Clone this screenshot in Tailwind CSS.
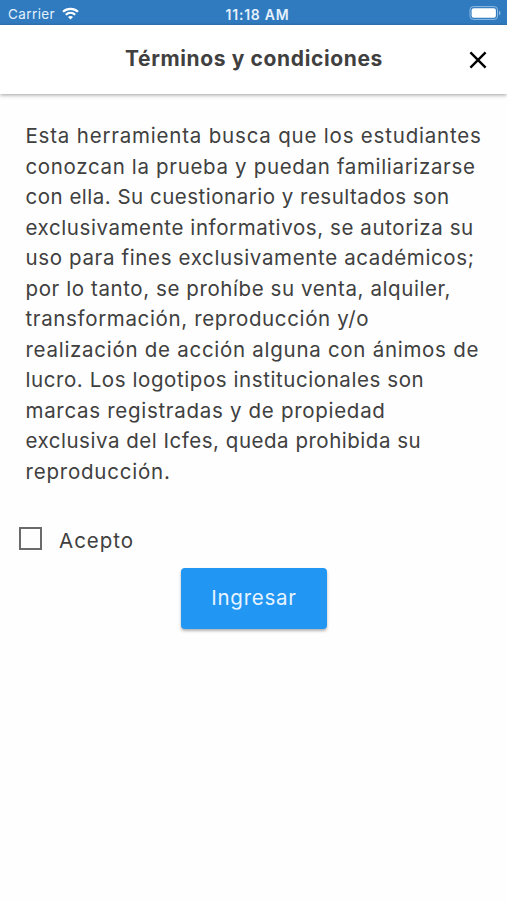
<!DOCTYPE html>
<html lang="es">
<head>
<meta charset="utf-8">
<meta name="viewport" content="width=device-width, initial-scale=1">
<title>Términos y condiciones</title>
<script src="https://cdn.jsdelivr.net/npm/@tailwindcss/browser@4"></script>
</head>
<body class="bg-[#fefefe] font-['Inter','Open_Sans',sans-serif] text-[#404040]">
<div class="flex h-[900px] w-[507px] flex-col overflow-hidden">
  <div class="grid h-[25px] shrink-0 grid-cols-3 items-center bg-[#307bc0] pl-[8px] pr-[6px] pt-[3px] text-[13.5px] text-[#e4f0fb]">
    <div class="flex items-center gap-[7px]">
      <span class="whitespace-nowrap tracking-[0.4px]">Carrier</span>
      <svg class="-mt-[2px] h-[13px] w-[17px]" viewBox="0 0 17 13" fill="none" stroke="#fff" stroke-width="2.2"><path d="M1 4.8C5.2.8 11.8.8 16 4.8M3.8 7.7c2.7-2.5 6.7-2.5 9.4 0"/><path d="M8.5 12.4 6 9.9c1.4-1.3 3.6-1.3 5 0z" fill="#fff" stroke="none"/></svg>
    </div>
    <div class="flex justify-center pl-[6px]"><span class="whitespace-nowrap text-[14px] font-semibold tracking-[0.75px]">11:18 AM</span></div>
    <svg class="-mt-[2px] h-[14px] w-[32px] justify-self-end" viewBox="0 0 32 14"><rect x="1" y=".6" width="27.5" height="12.8" rx="3.2" fill="none" stroke="#8fbbe3"/><rect x="2.6" y="2.2" width="24.3" height="9.6" rx="2" fill="#fff"/><path d="M30 4.8v4.4q1.5-.5 1.5-2.2T30 4.8z" fill="#8fbbe3"/></svg>
  </div>
  <header class="grid h-[69px] shrink-0 grid-cols-[60px_1fr_60px] items-center bg-white shadow-[0_1px_4px_rgba(0,0,0,0.38)]">
    <span></span>
    <h1 class="-mt-[2px] flex justify-center pl-[1px] text-[21px] font-bold leading-[30px]"><span class="whitespace-nowrap tracking-[0.62px]">Términos y condiciones</span></h1>
    <button aria-label="Cerrar" class="flex justify-center pl-[1px]"><svg class="h-[18px] w-[18px]" viewBox="0 0 18 18" fill="none" stroke="#000" stroke-width="2.4"><path d="m1.4 1.4 15.2 15.2M16.6 1.4 1.4 16.6"/></svg></button>
  </header>
  <main class="flex flex-col pt-[27px]">
    <p class="flex flex-col items-start pl-[25.5px] text-[20.5px] leading-[30.55px]">
      <span class="whitespace-nowrap tracking-[0.8px]">Esta herramienta busca que los estudiantes</span>
      <span class="whitespace-nowrap tracking-[0.66px]">conozcan la prueba y puedan familiarizarse</span>
      <span class="whitespace-nowrap tracking-[0.5px]">con ella. Su cuestionario y resultados son</span>
      <span class="whitespace-nowrap tracking-[0.59px]">exclusivamente informativos, se autoriza su</span>
      <span class="whitespace-nowrap tracking-[0.64px]">uso para fines exclusivamente académicos;</span>
      <span class="whitespace-nowrap tracking-[0.59px]">por lo tanto, se prohíbe su venta, alquiler,</span>
      <span class="whitespace-nowrap tracking-[0.64px]">transformación, reproducción y/o</span>
      <span class="whitespace-nowrap tracking-[0.72px]">realización de acción alguna con ánimos de</span>
      <span class="whitespace-nowrap tracking-[0.58px]">lucro. Los logotipos institucionales son</span>
      <span class="whitespace-nowrap tracking-[0.7px]">marcas registradas y de propiedad</span>
      <span class="whitespace-nowrap tracking-[0.52px]">exclusiva del Icfes, queda prohibida su</span>
      <span class="whitespace-nowrap tracking-[0.78px]">reproducción.</span>
    </p>
    <label class="mt-[35px] flex h-[32px] items-center pl-[19px] text-[20.5px]">
      <span class="-mt-[1px] h-[23px] w-[23px] border-[2.5px] border-[#6a6a6a]"></span>
      <span class="ml-[17px] mt-[5px] whitespace-nowrap tracking-[1px]">Acepto</span>
    </label>
    <button class="ml-[181px] mt-[13px] flex h-[61px] w-[146px] items-center justify-center rounded-[4px] bg-[#2296f3] text-[20.5px] text-[#e7f4ff] shadow-[0_2px_3px_rgba(0,0,0,0.3)]"><span class="whitespace-nowrap tracking-[0.75px]">Ingresar</span></button>
  </main>
</div>
</body>
</html>
